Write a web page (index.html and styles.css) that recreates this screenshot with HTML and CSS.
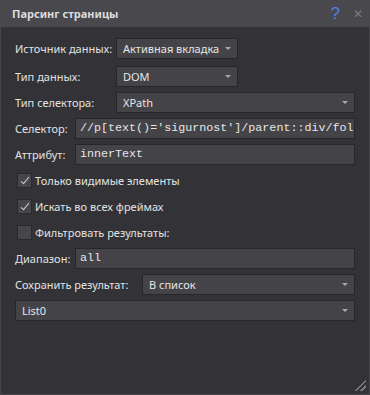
FILE: index.html
```html
<!DOCTYPE html>
<html lang="ru">
<head>
  <meta charset="UTF-8" />
  <title>Парсинг страницы</title>
  <link rel="stylesheet" href="styles.css">
</head>
<body>
  <div class="window">
    <div class="titlebar">
      <span class="title">Парсинг страницы</span>
      <span class="help">?</span>
      <span class="close">&#x2715;</span>
    </div>

    <div class="content">
      <div class="row first">
        <label class="lbl w-src">Источник данных:</label>
        <div class="select short">Активная вкладка</div>
      </div>
      <div class="row">
        <label class="lbl w-src">Тип данных:</label>
        <div class="select short">DOM</div>
      </div>
      <div class="row">
        <label class="lbl w-src">Тип селектора:</label>
        <div class="select grow">XPath</div>
      </div>
      <div class="row">
        <label class="lbl w-sel">Селектор:</label>
        <div class="input grow">//p[text()='sigurnost']/parent::div/following-sibling::div</div>
      </div>
      <div class="row">
        <label class="lbl w-sel">Аттрибут:</label>
        <div class="input grow">innerText</div>
      </div>
      <div class="row check">
        <span class="box checked"></span> Только видимые элементы
      </div>
      <div class="row check">
        <span class="box checked"></span> Искать во всех фреймах
      </div>
      <div class="row check">
        <span class="box"></span> Фильтровать результаты:
      </div>
      <div class="row">
        <label class="lbl w-sel">Диапазон:</label>
        <div class="input grow">all</div>
      </div>
      <div class="row">
        <label class="lbl w-save">Сохранить результат:</label>
        <div class="select grow">В список</div>
      </div>
      <div class="row last">
        <div class="select grow">List0</div>
      </div>
    </div>

    <div class="grip"></div>
  </div>
</body>
</html>
```

FILE: styles.css
```css
html, body {
  margin: 0;
  height: 100%;
}
body {
  font-family: "Noto Sans", "Open Sans", sans-serif;
  font-size: 11px;
  color: #e2e2e2;
  background: #333337;
}
.window {
  position: relative;
  height: 395px;
  box-sizing: border-box;
  border: 1px solid #46464b;
  border-top: none;
  background: #333337;
}
.titlebar {
  display: flex;
  align-items: center;
  height: 27px;
  padding: 0 7px 0 12px;
  margin: 0 -1px;
  background: #48484d;
  box-sizing: border-box;
}
.title {
  flex: 1;
  font-weight: bold;
  font-size: 11px;
  color: #dcdcdc;
}
.help {
  color: #4c83e0;
  font-size: 17px;
  font-family: "Liberation Sans", sans-serif;
  margin-right: 13px;
  margin-top: 1px;
}
.close {
  color: #7c7c80;
  font-size: 12px;
}
.content {
  padding: 11px 14px 0 14px;
}
.row {
  display: flex;
  align-items: center;
  height: 21px;
  margin-bottom: 5px;
}
.row.first {
  margin-bottom: 7px;
}
.row.last {
  margin-top: 2px;
}
.lbl {
  flex: none;
  white-space: nowrap;
}
.w-src { width: 101px; }
.w-sel { width: 60px; }
.w-save { width: 127px; }
.select, .input {
  position: relative;
  height: 21px;
  line-height: 19px;
  box-sizing: border-box;
  background: #434348;
  border: 1px solid #27272a;
  padding: 0 6px;
  overflow: hidden;
  white-space: nowrap;
  color: #e6e6e6;
}
.short { width: 122px; }
.grow { flex: 1; min-width: 0; }
.select {
  padding-right: 20px;
}
.select::after {
  content: "";
  position: absolute;
  right: 6px;
  top: 8px;
  border-left: 3px solid transparent;
  border-right: 3px solid transparent;
  border-top: 3px solid #a6a6aa;
}
.input {
  font-family: "Liberation Mono", monospace;
  font-size: 11.7px;
  padding: 0 4px;
  text-overflow: clip;
}
.check {
  gap: 3px;
  padding-left: 2px;
}
.box {
  position: relative;
  width: 15px;
  height: 15px;
  box-sizing: border-box;
  background: #46464b;
  border: 1px solid #2a2a2d;
}
.box.checked::after {
  content: "";
  position: absolute;
  left: 5px;
  top: 1px;
  width: 3px;
  height: 8px;
  border-right: 1px solid #d0d0d0;
  border-bottom: 1px solid #d0d0d0;
  transform: rotate(40deg);
}
.grip {
  position: absolute;
  right: 3px;
  bottom: 3px;
  width: 13px;
  height: 13px;
  background: repeating-linear-gradient(135deg, transparent 0 2px, #77777c 2px 4px);
  clip-path: polygon(100% 0, 100% 100%, 0 100%);
}
```
